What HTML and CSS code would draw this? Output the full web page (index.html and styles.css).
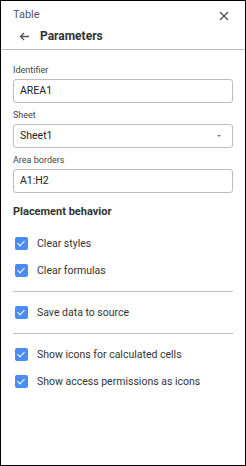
FILE: index.html
```html
<!DOCTYPE html>
<html>

<head>
    <title>Parameters</title>
    <meta charset="utf-8">
    <link rel="stylesheet" href="styles.css">
</head>

<body>
    <div class="panel">
        <div class="panel-head">
            <div class="head-top">
                <span class="head-caption">Table</span>
                <svg class="head-close" width="10" height="10" viewBox="0 0 10 10">
                    <path d="M1 1L9 9M9 1L1 9" stroke="#555" stroke-width="1.4" fill="none" />
                </svg>
            </div>
            <div class="head-title">
                <svg class="head-back" width="10" height="9" viewBox="0 0 10 9">
                    <path d="M10 4.5H1.5M5 1L1.5 4.5L5 8" stroke="#555" stroke-width="1.3" fill="none" />
                </svg>
                <span>Parameters</span>
            </div>
        </div>
        <div class="panel-body">
            <div class="field">
                <label>Identifier</label>
                <div class="input">AREA1</div>
            </div>
            <div class="field">
                <label>Sheet</label>
                <div class="input select">Sheet1<span class="select-arrow"></span></div>
            </div>
            <div class="field">
                <label>Area borders</label>
                <div class="input">A1:H2</div>
            </div>
            <h4>Placement behavior</h4>
            <div class="check"><span class="box"></span>Clear styles</div>
            <div class="check"><span class="box"></span>Clear formulas</div>
            <hr>
            <div class="check"><span class="box"></span>Save data to source</div>
            <hr>
            <div class="check"><span class="box"></span>Show icons for calculated cells</div>
            <div class="check"><span class="box"></span>Show access permissions as icons</div>
        </div>
    </div>
</body>

</html>
```

FILE: styles.css
```css
body {
    margin: 0;
}

.panel {
    width: 246px;
    height: 466px;
    box-sizing: border-box;
    border: 1px solid #000;
    font-family: Roboto, "Liberation Sans", sans-serif;
    color: #333;
    background: #fff;
}

.panel-head {
    border-bottom: 1px solid #bdbdbd;
    padding: 5px 12px 0 12px;
    height: 43px;
}

.head-top {
    display: flex;
    justify-content: space-between;
    align-items: center;
    height: 16px;
}

.head-caption {
    font-size: 11px;
    color: #555;
}

.head-close {
    margin-right: 4px;
    margin-top: 3px;
}

.head-title {
    display: flex;
    align-items: center;
    height: 24px;
    margin-top: 2px;
    font-size: 12px;
    font-weight: bold;
    color: #333;
}

.head-back {
    margin-left: 6px;
    margin-right: 11px;
}

.panel-body {
    padding: 13px 12px 0 12px;
}

.field {
    margin-bottom: 5px;
}

.field label {
    display: block;
    font-size: 9px;
    line-height: 14px;
    color: #444;
    margin-bottom: 2px;
}

.input {
    height: 24px;
    box-sizing: border-box;
    border: 1px solid #bdbdbd;
    border-radius: 3px;
    padding: 0 6px;
    font-size: 10.5px;
    line-height: 22px;
    color: #222;
    display: flex;
    align-items: center;
    justify-content: space-between;
}

.select-arrow {
    width: 0;
    height: 0;
    border-left: 2.5px solid transparent;
    border-right: 2.5px solid transparent;
    border-top: 2.5px solid #777;
    margin-right: 5px;
}

.panel-body h4 {
    margin: 12px 0 11px 0;
    font-size: 11px;
    line-height: 14px;
    font-weight: bold;
    color: #333;
}

.check {
    display: flex;
    align-items: center;
    height: 27px;
    font-size: 10.5px;
    color: #333;
}

.box {
    width: 13px;
    height: 13px;
    border-radius: 2px;
    background: #4a8cf1;
    margin-left: 2px;
    margin-right: 9px;
    position: relative;
}

.box::after {
    content: "";
    position: absolute;
    left: 4px;
    top: 2px;
    width: 3px;
    height: 6px;
    border-right: 1.5px solid #fff;
    border-bottom: 1.5px solid #fff;
    transform: rotate(45deg);
}

.panel-body hr {
    border: 0;
    border-top: 1px solid #bdbdbd;
    margin: 7px 0 7px 0;
}
```
